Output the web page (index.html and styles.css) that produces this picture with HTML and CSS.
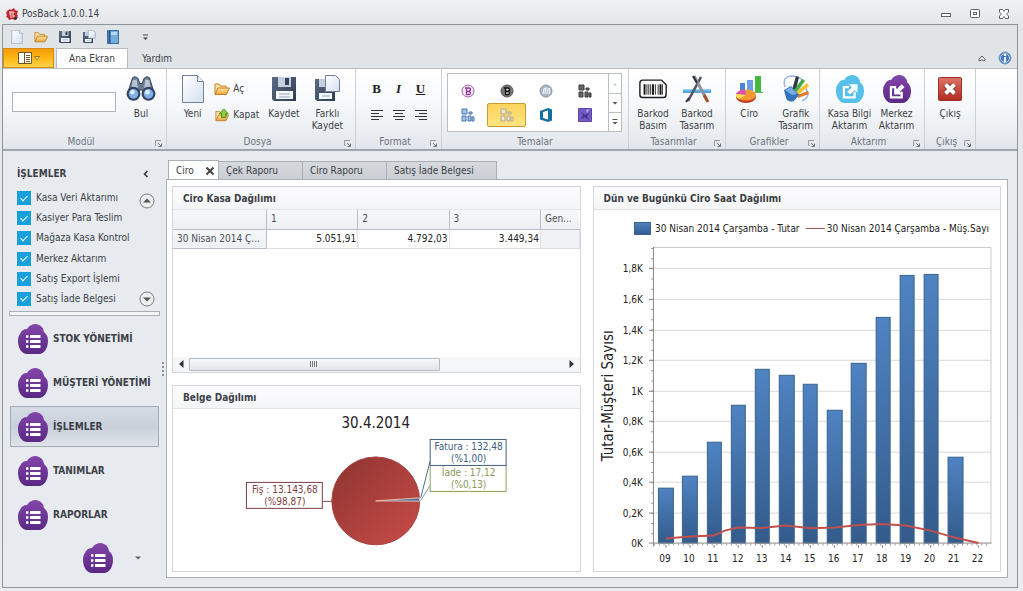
FILE: index.html
```html
<!DOCTYPE html>
<html lang="tr">
<head>
<meta charset="utf-8">
<meta name="viewport" content="width=device-width, initial-scale=1">
<title>PosBack 1.0.0.14</title>
<link rel="stylesheet" href="styles.css">
</head>
<body>
<svg class="defs" aria-hidden="true">
  <defs>
    <linearGradient id="g-purple" x1="0" y1="0" x2="0" y2="1"><stop offset="0" stop-color="#8346aa"/><stop offset="1" stop-color="#5a2884"/></linearGradient>
    <linearGradient id="g-page" x1="0" y1="0" x2="1" y2="1"><stop offset="0" stop-color="#fff"/><stop offset="1" stop-color="#d5e0f2"/></linearGradient>
    <linearGradient id="g-folder" x1="0" y1="0" x2="0" y2="1"><stop offset="0" stop-color="#fde3a0"/><stop offset="1" stop-color="#eda63e"/></linearGradient>
    <linearGradient id="g-disk" x1="0" y1="0" x2="1" y2="1"><stop offset="0" stop-color="#5c6c84"/><stop offset="1" stop-color="#2f3c52"/></linearGradient>
    <linearGradient id="g-red" x1="0" y1="0" x2="0" y2="1"><stop offset="0" stop-color="#dd7568"/><stop offset="1" stop-color="#b22a1f"/></linearGradient>
    <linearGradient id="g-bar" x1="0" y1="0" x2="0" y2="1"><stop offset="0" stop-color="#4f83c2"/><stop offset="1" stop-color="#335b8b"/></linearGradient>
    <linearGradient id="g-pie" x1="0" y1="0" x2="1" y2="1"><stop offset="0" stop-color="#8d3431"/><stop offset="1" stop-color="#c94c48"/></linearGradient>
  </defs>
  <symbol id="i-page" viewBox="0 0 28 28"><path d="M3.500 .5h15l6 6v21h-21z" fill="url(#g-page)" stroke="#73809d"/><path d="M18.500 .5v6h6" fill="#eef3fb" stroke="#73809d"/></symbol>
  <symbol id="i-folder" viewBox="0 0 16 14"><path d="M1 12V2h4l1.500 2H12v3" fill="#fbe3a6" stroke="#c98528"/><path d="M1 12.500L4 6h11.500l-3 6.500z" fill="url(#g-folder)" stroke="#c47a1e"/></symbol>
  <symbol id="i-close-folder" viewBox="0 0 16 16"><path d="M1 14V4h4l1.500 2H13v2" fill="#fbe3a6" stroke="#c98528"/><path d="M1 14.500L4 8h11.500l-3 6.500z" fill="url(#g-folder)" stroke="#c47a1e"/><path d="M10 1l5 5.500h-2.500V11h-5V6.500H5z" fill="#8ccf3e" stroke="#47851b"/></symbol>
  <symbol id="i-disk" viewBox="0 0 28 28"><path d="M2 2h24v24H4l-2-2z" fill="url(#g-disk)"/><path d="M8 2h13v10H8z" fill="#c5d0de"/><path d="M15 3h4v7h-4z" fill="#35425a"/><path d="M6 16h17v8H6z" fill="#f4f8fc"/><path d="M9 19h11M9 22h11" stroke="#8da3c0"/></symbol>
  <symbol id="i-disk-as" viewBox="0 0 28 28"><path d="M2 4h20v22H4l-2-2z" fill="url(#g-disk)"/><path d="M6 4h8v8H6z" fill="#c5d0de"/><path d="M6 18h13v6H6z" fill="#f4f8fc"/><path d="M9 21h8" stroke="#8da3c0"/><path d="M12.500 .5h10l4 4v12h-14z" fill="url(#g-page)" stroke="#73809d"/></symbol>
  <symbol id="i-book" viewBox="0 0 14 14"><path d="M1.500 .5h11v13h-11z" fill="#71aede" stroke="#3c6d9f"/><path d="M3.500 1v12" stroke="#285485" stroke-width="2"/><path d="M5 2h6v3H5z" fill="#b6daf3"/></symbol>
  <symbol id="i-find" viewBox="0 0 28 26"><path d="M2 16L6 3q2-3 5 0l2 5h2l2-5q3-3 5 0l4 13-8 2-3-4h-2l-3 4z" fill="#6b7a90" stroke="#3c4a60"/><path d="M6 5l4-1 1 8-6 2zM18 4l4 1 1 9-6-2z" fill="#b9c4d2"/><circle cx="7" cy="17.500" r="5.500" fill="#7fb0ea" stroke="#34445e" stroke-width="2"/><circle cx="21" cy="17.500" r="5.500" fill="#7fb0ea" stroke="#34445e" stroke-width="2"/><circle cx="6" cy="16" r="2.200" fill="#dcecfb"/><circle cx="20" cy="16" r="2.200" fill="#dcecfb"/></symbol>
  <symbol id="i-cloud" viewBox="0 0 30 30"><path d="M2 10Q4 5 9 5 12 0 18 0 25 1 26 8 30 11 30 17C30 24 26 30 21 30H9C4 30 0 24 0 17Q0 12 2 10Z"/></symbol>
  <symbol id="i-list" viewBox="0 0 30 30"><use href="#i-cloud" fill="url(#g-purple)"/><path d="M12 12.500h10.500M12 17.500h10.500M12 22.500h10.500" stroke="#fff" stroke-width="2.800"/><path d="M8 12.500h2.400M8 17.500h2.400M8 22.500h2.400" stroke="#fff" stroke-width="2.400"/></symbol>
  <symbol id="i-export" viewBox="0 0 30 30"><use href="#i-cloud" fill="#55c0ea"/><path d="M14 13H8.500v11H20v-6" fill="none" stroke="#fff" stroke-width="2.400"/><path d="M14 10h9v9l-3-3-5 5-3-3 5-5z" fill="#fff"/></symbol>
  <symbol id="i-import" viewBox="0 0 30 30"><use href="#i-cloud" fill="url(#g-purple)"/><path d="M14 13H8.500v11H20v-6" fill="none" stroke="#fff" stroke-width="2.400"/><path d="M12 21v-9l3 3 5-5 3 3-5 5 3 3z" fill="#fff"/></symbol>
  <symbol id="i-barcode" viewBox="0 0 32 28"><path d="M5 4.500h20l5 5V20q0 3-3 3H5q-3 0-3-3V7.500q0-3 3-3z" fill="#fff" stroke="#1c1c1c" stroke-width="1.500"/><path d="M7 9v11M16 9v11M24 9v11" stroke="#111" stroke-width="2"/><path d="M9.500 9v11M11.500 9v11M13.500 9v11M18.500 9v11M21.500 9v11M26 9v11" stroke="#222"/></symbol>
  <symbol id="i-appstore" viewBox="0 0 28 28"><path d="M0 14h28v4H0z" fill="#55a8df"/><path d="M0 14h28v1.500H0z" fill="#91cdf0"/><path d="M18 2L5 26" stroke="#51535f" stroke-width="2.600"/><path d="M11 1l13 24" stroke="#8c93a1" stroke-width="3"/><path d="M10 1l4 7" stroke="#2a2c35" stroke-width="2"/><path d="M21 20l4 7" stroke="#a5512b" stroke-width="3"/><path d="M6 23l-3 4" stroke="#333" stroke-width="2"/></symbol>
  <symbol id="i-charts" viewBox="0 0 28 28"><path d="M5 8h5v9H5z" fill="#4c86dc"/><path d="M12 5h6v12h-6z" fill="#6f9fe4"/><path d="M20 1h6v16h-6z" fill="#45b83d"/><path d="M4 17.500h24" stroke="#62b070"/><ellipse cx="11" cy="22" rx="10" ry="6" fill="#c23a20"/><ellipse cx="11" cy="20" rx="10" ry="5.500" fill="#f49a33"/><path d="M11 20L1 19q2-4 9-4.500z" fill="#d951b4"/><path d="M11 20l-7 4q-4-2-3-5z" fill="#f9de55"/></symbol>
  <symbol id="i-brushes" viewBox="0 0 28 28"><path d="M3 12q-3-10 6-11 7 0 13 5M24 14q5 8-4 12" fill="none" stroke="#9cb6dc" stroke-width="1.500"/><path d="M10 15L14 1l3 1-3 13z" fill="#343846"/><path d="M12 15L20 4l3 2-8 11z" fill="#48a844"/><path d="M14 17L25 8l2 3-11 9z" fill="#f2c22f"/><path d="M15 20l11-4 1 3-11 4z" fill="#e47b2c"/><path d="M2 15l7-4 8 9-5 6q-6 2-8-3z" fill="#3474bd"/><path d="M3 15l6-3 6 7-5 1z" fill="#79aee2"/></symbol>
  <symbol id="i-exit" viewBox="0 0 28 28"><rect x="2.500" y="2.500" width="23" height="23" rx="1" fill="url(#g-red)" stroke="#9d3128"/><path d="M9.500 9.500l9 9M18.500 9.500l-9 9" stroke="#8e2a22" stroke-width="6"/><path d="M9.500 9.500l9 9M18.500 9.500l-9 9" stroke="#fff" stroke-width="4"/></symbol>
  <symbol id="i-launch" viewBox="0 0 7 7"><path d="M.5 6V.5H6" fill="none" stroke="#969ba3"/><path d="M3 3l3 3M6.500 3.500v3h-3" fill="none" stroke="#6f757e"/></symbol>
  <symbol id="i-tiles" viewBox="0 0 14 14"><path d="M1 1h5v5H1zM1 8h4v5H1zM7 8h3v5H7zM11 9h2v4h-2zM8 4h3v2H8z" stroke-width="1"/></symbol>
</svg>

<header class="titlebar">
  <svg class="logo" viewBox="0 0 12 12"><path d="M1 3l3-2 1 1 3-2 1 2 3 1-1 3 1 2-2 2-1 2-3-1-3 1-1-2-2-1 1-2-1-2z" fill="#c02a30"/><path d="M3 4h5v1H4v2h4v2H4" fill="none" stroke="#fff" stroke-width=".8"/><path d="M7 10l5-1-2 3z" fill="#3a1a1c"/></svg>
  <h1 class="app-title">PosBack 1.0.0.14</h1>
  <div class="window-buttons">
    <button aria-label="Simge durumuna küçült"><svg viewBox="0 0 12 12"><rect x="1.500" y="5.500" width="9" height="3" fill="#fff" stroke="#5d6268"/></svg></button>
    <button aria-label="Ekranı kapla"><svg viewBox="0 0 12 12"><rect x="1.500" y="1.500" width="9" height="8" rx="1" fill="#fff" stroke="#5d6268"/><rect x="4.500" y="4.500" width="3" height="2" fill="#fff" stroke="#5d6268"/></svg></button>
    <button aria-label="Pencereyi kapat"><svg viewBox="0 0 12 12"><path d="M1.500 1.500h3L6 3.500l1.500-2h3v2.500L8.500 6l2 2v2.500h-3L6 8.500l-1.500 2h-3V8l2-2-2-2z" fill="#fff" stroke="#5d6268"/></svg></button>
  </div>
</header>

<div class="frame">
  <div class="quick-access">
    <button aria-label="Yeni"><svg viewBox="0 0 28 28"><use href="#i-page"/></svg></button>
    <button aria-label="Aç"><svg viewBox="0 0 16 14"><use href="#i-folder"/></svg></button>
    <button aria-label="Kaydet"><svg viewBox="0 0 28 28"><use href="#i-disk"/></svg></button>
    <button aria-label="Farklı Kaydet"><svg viewBox="0 0 28 28"><use href="#i-disk-as"/></svg></button>
    <button aria-label="Defter"><svg viewBox="0 0 14 14"><use href="#i-book"/></svg></button>
    <button class="qat-more" aria-label="Özelleştir"><svg viewBox="0 0 14 14"><path d="M5 5h5" stroke="#444"/><path d="M5 7.500h5l-2.500 2.500z" fill="#444"/></svg></button>
  </div>

  <nav class="ribbon-tabs">
    <button class="app-button" aria-label="Uygulama menüsü"><svg viewBox="0 0 24 12"><path d="M1.500 .5h13v11h-13z" fill="#fff" stroke="#6e571c"/><path d="M7.500 1v10" stroke="#6e571c"/><path d="M9 3.500h4M9 5.500h4M9 7.500h4M9 9.500h4" stroke="#6e571c"/><path d="M17.500 4.500h5L20 8z" fill="#fff" stroke="#a8730c"/></svg></button>
    <button class="ribbon-tab active">Ana Ekran</button>
    <button class="ribbon-tab">Yardım</button>
    <div class="ribbon-tools">
      <button aria-label="Şeridi daralt"><svg viewBox="0 0 14 14"><path d="M3.500 9L7 5l3.500 4-1.500 1-2-1.500L5 10z" fill="#fff" stroke="#555"/></svg></button>
      <button aria-label="Bilgi"><svg viewBox="0 0 14 14"><circle cx="7" cy="7" r="6" fill="#3f76bd" stroke="#7f9cc4"/><circle cx="7" cy="7" r="4.500" fill="none" stroke="#bcd5f2"/><path d="M7 3v2M7 6v5" stroke="#fff" stroke-width="2.200"/></svg></button>
    </div>
  </nav>

  <section class="ribbon" aria-label="Şerit">
    <div class="group group-module">
      <div class="group-body">
        <input class="module-input" type="text" aria-label="Modül">
        <button class="large"><svg viewBox="0 0 28 26"><use href="#i-find"/></svg>Bul</button>
      </div>
      <div class="caption"><span>Modül</span><svg><use href="#i-launch"/></svg></div>
    </div>
    <div class="group group-file">
      <div class="group-body">
        <button class="large"><svg viewBox="0 0 28 28"><use href="#i-page"/></svg>Yeni</button>
        <div class="small-stack">
          <button class="small"><svg viewBox="0 0 16 14"><use href="#i-folder"/></svg>Aç</button>
          <button class="small"><svg viewBox="0 0 16 16"><use href="#i-close-folder"/></svg>Kapat</button>
        </div>
        <button class="large"><svg viewBox="0 0 28 28"><use href="#i-disk"/></svg>Kaydet</button>
        <button class="large"><svg viewBox="0 0 28 28"><use href="#i-disk-as"/></svg>Farklı<br>Kaydet</button>
      </div>
      <div class="caption"><span>Dosya</span><svg><use href="#i-launch"/></svg></div>
    </div>
    <div class="group group-format">
      <div class="group-body format-grid">
        <button class="glyph bold">B</button>
        <button class="glyph italic">I</button>
        <button class="glyph underline">U</button>
        <button aria-label="Sola hizala"><svg viewBox="0 0 12 12"><path d="M0 1.500h12M0 4.500h8M0 7.500h12M0 10.500h8" stroke="#333"/></svg></button>
        <button aria-label="Ortala"><svg viewBox="0 0 12 12"><path d="M0 1.500h12M2 4.500h8M0 7.500h12M2 10.500h8" stroke="#333"/></svg></button>
        <button aria-label="Sağa hizala"><svg viewBox="0 0 12 12"><path d="M0 1.500h12M4 4.500h8M0 7.500h12M4 10.500h8" stroke="#333"/></svg></button>
      </div>
      <div class="caption"><span>Format</span><svg><use href="#i-launch"/></svg></div>
    </div>
    <div class="group group-themes">
      <div class="group-body">
        <div class="gallery">
          <div class="gallery-items">
            <button aria-label="Tema 1"><svg viewBox="0 0 14 14"><circle cx="7" cy="7" r="6" fill="#f6e6f6" stroke="#a45fae"/><path d="M5.500 4v6.500h2.500a1.500 1.500 0 0 0 0-3H6M8 7a1.500 1.500 0 0 0 0-3H4" fill="none" stroke="#8a3c98" stroke-width="1.300"/></svg></button>
            <button aria-label="Tema 2"><svg viewBox="0 0 14 14"><circle cx="7" cy="7" r="6" fill="#777" stroke="#555"/><path d="M5.500 4v6.500h2.500a1.500 1.500 0 0 0 0-3H6M8 7a1.500 1.500 0 0 0 0-3H4" fill="#ddd" stroke="#111" stroke-width="1.300"/></svg></button>
            <button aria-label="Tema 3"><svg viewBox="0 0 14 14"><circle cx="7" cy="7" r="6" fill="#a9b5c3" stroke="#8795a6"/><path d="M4 10l1-5 2-1-1 6M8 10l1-5q3-2 1 5" fill="none" stroke="#eff4f9" stroke-width="1.200"/></svg></button>
            <button aria-label="Tema 4"><svg viewBox="0 0 14 14"><use href="#i-tiles" fill="#666" stroke="#3d3d3d"/></svg></button>
            <button aria-label="Tema 5"><svg viewBox="0 0 14 14"><use href="#i-tiles" fill="#a3c2e8" stroke="#4878b2"/></svg></button>
            <button class="selected" aria-label="Tema 6"><svg viewBox="0 0 14 14"><use href="#i-tiles" fill="#eee8d2" stroke="#b0a68a"/></svg></button>
            <button aria-label="Tema 7"><svg viewBox="0 0 14 14"><path d="M1 3l8-3 4 1.500v11L9 14l-8-2.500zM4 4v6l5 1.500v-9z" fill="#146f9f" fill-rule="evenodd"/></svg></button>
            <button aria-label="Tema 8"><svg viewBox="0 0 14 14"><path d="M.5.5h13v13H.5z" fill="#7458c4" stroke="#5b48a4"/><path d="M3 4l4 3 5-3-3 4 2 4-4-3-4 2 2-4z" fill="#43318c"/><path d="M8 2l4-1-3 4z" fill="#b6a5e7"/></svg></button>
          </div>
          <div class="gallery-scroll">
            <button disabled aria-label="Yukarı"><svg viewBox="0 0 8 8"><path d="M2 5.500h4L4 3z" fill="#c6c9cd"/></svg></button>
            <button aria-label="Aşağı"><svg viewBox="0 0 8 8"><path d="M1.500 3h5L4 5.500z" fill="#555"/></svg></button>
            <button aria-label="Tümü"><svg viewBox="0 0 8 8"><path d="M1.500 1.500h5" stroke="#555"/><path d="M1.500 4h5L4 6.500z" fill="#555"/></svg></button>
          </div>
        </div>
      </div>
      <div class="caption"><span>Temalar</span></div>
    </div>
    <div class="group group-design">
      <div class="group-body">
        <button class="large"><svg viewBox="0 0 32 28"><use href="#i-barcode"/></svg>Barkod<br>Basım</button>
        <button class="large"><svg viewBox="0 0 28 28"><use href="#i-appstore"/></svg>Barkod<br>Tasarım</button>
      </div>
      <div class="caption"><span>Tasarımlar</span><svg><use href="#i-launch"/></svg></div>
    </div>
    <div class="group group-charts">
      <div class="group-body">
        <button class="large"><svg viewBox="0 0 28 28"><use href="#i-charts"/></svg>Ciro</button>
        <button class="large"><svg viewBox="0 0 28 28"><use href="#i-brushes"/></svg>Grafik<br>Tasarım</button>
      </div>
      <div class="caption"><span>Grafikler</span><svg><use href="#i-launch"/></svg></div>
    </div>
    <div class="group group-transfer">
      <div class="group-body">
        <button class="large"><svg viewBox="0 0 30 30"><use href="#i-export"/></svg>Kasa Bilgi<br>Aktarım</button>
        <button class="large"><svg viewBox="0 0 30 30"><use href="#i-import"/></svg>Merkez<br>Aktarım</button>
      </div>
      <div class="caption"><span>Aktarım</span><svg><use href="#i-launch"/></svg></div>
    </div>
    <div class="group group-exit">
      <div class="group-body">
        <button class="large"><svg viewBox="0 0 28 28"><use href="#i-exit"/></svg>Çıkış</button>
      </div>
      <div class="caption"><span>Çıkış</span><svg><use href="#i-launch"/></svg></div>
    </div>
  </section>

  <div class="workspace">
    <aside class="sidebar">
      <div class="side-head"><h2>İŞLEMLER</h2><button aria-label="Daralt"><svg viewBox="0 0 8 8"><path d="M5.500 1L2.500 4l3 3" fill="none" stroke="#333" stroke-width="1.500"/></svg></button></div>
      <div class="side-list">
        <div class="checks">
          <label><input type="checkbox" checked>Kasa Veri Aktarımı</label>
          <label><input type="checkbox" checked>Kasiyer Para Teslim</label>
          <label><input type="checkbox" checked>Mağaza Kasa Kontrol</label>
          <label><input type="checkbox" checked>Merkez Aktarım</label>
          <label><input type="checkbox" checked>Satış Export İşlemi</label>
          <label><input type="checkbox" checked>Satış İade Belgesi</label>
        </div>
        <div class="side-scroll">
          <button aria-label="Yukarı kaydır"><svg viewBox="0 0 16 16"><circle cx="8" cy="8" r="7" fill="#eceef0" stroke="#777c82"/><path d="M4 9.500h8L8 5.500z" fill="#555"/></svg></button>
          <button aria-label="Aşağı kaydır"><svg viewBox="0 0 16 16"><circle cx="8" cy="8" r="7" fill="#eceef0" stroke="#777c82"/><path d="M4 6.500h8l-4 4z" fill="#555"/></svg></button>
        </div>
      </div>
      <div class="side-splitter"></div>
      <nav class="side-nav">
        <button><svg><use href="#i-list"/></svg>STOK YÖNETİMİ</button>
        <button><svg><use href="#i-list"/></svg>MÜŞTERİ YÖNETİMİ</button>
        <button class="current"><svg><use href="#i-list"/></svg>İŞLEMLER</button>
        <button><svg><use href="#i-list"/></svg>TANIMLAR</button>
        <button><svg><use href="#i-list"/></svg>RAPORLAR</button>
      </nav>
      <div class="side-overflow">
        <button aria-label="Liste"><svg viewBox="0 0 30 30"><use href="#i-list"/></svg></button>
        <button class="more" aria-label="Diğer"><svg viewBox="0 0 8 8"><path d="M1 2.500h6L4 5.500z" fill="#666"/></svg></button>
      </div>
    </aside>
    <div class="grip"><svg viewBox="0 0 4 14"><path d="M1 1h2M1 5h2M1 9h2M1 13h2" stroke="#8a9099" stroke-width="2"/></svg></div>

    <main class="content">
      <div class="doc-tabs">
        <button class="doc-tab active">Ciro<svg viewBox="0 0 10 10"><path d="M1.500 1.500l7 7M8.500 1.500l-7 7" stroke="#444" stroke-width="2"/></svg></button>
        <button class="doc-tab">Çek Raporu</button>
        <button class="doc-tab">Ciro Raporu</button>
        <button class="doc-tab wide">Satış İade Belgesi</button>
      </div>
      <div class="panels">
        <section class="panel">
          <h3>Ciro Kasa Dağılımı</h3>
          <div class="pivot">
            <table>
              <colgroup><col class="c-name"><col class="c-val"><col class="c-val"><col class="c-val"><col></colgroup>
              <thead><tr><th aria-label="Tarih"></th><th scope="col">1</th><th scope="col">2</th><th scope="col">3</th><th scope="col">Gen...</th></tr></thead>
              <tbody><tr><th scope="row">30 Nisan 2014 Ç...</th><td>5.051,91</td><td>4.792,03</td><td>3.449,34</td><td class="total"></td></tr></tbody>
            </table>
          </div>
          <div class="hscroll">
            <button aria-label="Sola"><svg viewBox="0 0 8 10"><path d="M6.500 1v8L2 5z" fill="#333"/></svg></button>
            <div class="track"><div class="thumb"><svg viewBox="0 0 8 8"><path d="M.5 1v6M2.500 1v6M4.500 1v6M6.500 1v6" stroke="#777"/></svg></div></div>
            <button aria-label="Sağa"><svg viewBox="0 0 8 10"><path d="M1.500 1v8L6 5z" fill="#333"/></svg></button>
          </div>
        </section>

        <section class="panel panel-chart">
          <h3>Dün ve Bugünkü Ciro Saat Dağılımı</h3>
          <svg class="chart" viewBox="593 210 407 361" role="img" aria-label="Ciro saat dağılımı">
            <rect x="633.500" y="222.500" width="16" height="12" fill="url(#g-bar)" stroke="#38608f"/>
            <text x="654" y="232">30 Nisan 2014 Çarşamba - Tutar</text>
            <path d="M805 228.500h19" stroke="#a8504e"/>
            <text x="826" y="232">30 Nisan 2014 Çarşamba - Müş.Sayı</text>
            <path class="gridline" d="M653 268.500h337M653 299.500h337M653 330.500h337M653 360.500h337M653 391.500h337M653 421.500h337M653 452.500h337M653 482.500h337M653 513.500h337"/>
            <path d="M653 247.500h337.500v296" fill="none" stroke="#c9c9c9"/>
            <g fill="url(#g-bar)" stroke="#3a628f">
              <rect x="657.500" y="488.500" width="15" height="55"/><rect x="681.500" y="476.500" width="15" height="67"/><rect x="706.500" y="442.500" width="14" height="101"/><rect x="730.500" y="405.500" width="14" height="138"/><rect x="754.500" y="369.500" width="14" height="174"/><rect x="778.500" y="375.500" width="15" height="168"/><rect x="802.500" y="384.500" width="14" height="159"/><rect x="826.500" y="410.500" width="15" height="133"/><rect x="850.500" y="363.500" width="15" height="180"/><rect x="875.500" y="317.500" width="14" height="226"/><rect x="899.500" y="275.500" width="14" height="268"/><rect x="923.500" y="274.500" width="14" height="269"/><rect x="947.500" y="457.500" width="15" height="86"/>
            </g>
            <path d="M652.500 247v300M648 543.500h343" stroke="#888"/>
            <path class="axis" d="M648 268.500h5M648 299.500h5M648 330.500h5M648 360.500h5M648 391.500h5M648 421.500h5M648 452.500h5M648 482.500h5M648 513.500h5"/>
            <path d="M651.500 248v295" stroke="#888" stroke-width="2" stroke-dasharray="1 9.200"/>
            <path d="M653 545h337" stroke="#999" stroke-width="2" stroke-dasharray="1 3.820"/>
            <path d="M664.500 547h314" stroke="#888" stroke-width="3" stroke-dasharray="1 23.100"/>
            <polyline points="665,539 689,537 713,536 724,531 737,528 761,528.500 785,526 810,528.700 834,528 858,525.500 881,524.500 905,526 930,531 954,538 978,543.500" fill="none" stroke="#c0504d" stroke-width="2"/>
            <g text-anchor="end">
              <text x="642" y="272">1,8K</text><text x="642" y="303">1,6K</text><text x="642" y="334">1,4K</text><text x="642" y="364">1,2K</text><text x="642" y="395">1K</text><text x="642" y="425">0,8K</text><text x="642" y="456">0,6K</text><text x="642" y="486">0,4K</text><text x="642" y="517">0,2K</text><text x="642" y="547">0K</text>
            </g>
            <g text-anchor="middle">
              <text x="664" y="562">09</text><text x="688" y="562">10</text><text x="712" y="562">11</text><text x="737" y="562">12</text><text x="761" y="562">13</text><text x="785" y="562">14</text><text x="809" y="562">15</text><text x="833" y="562">16</text><text x="857" y="562">17</text><text x="881" y="562">18</text><text x="905" y="562">19</text><text x="929" y="562">20</text><text x="953" y="562">21</text><text x="977" y="562">22</text>
            </g>
            <text class="axis-title" text-anchor="middle" transform="translate(612 396) rotate(-90)">Tutar-Müşteri Sayısı</text>
          </svg>
        </section>

        <section class="panel">
          <h3>Belge Dağılımı</h3>
          <svg class="chart" viewBox="173 408 407 162" role="img" aria-label="Belge dağılımı">
            <text class="pie-title" x="376" y="427" text-anchor="middle">30.4.2014</text>
            <circle cx="376" cy="500" r="44" fill="url(#g-pie)" stroke="#a94442"/>
            <path d="M376 500l43.900-3v3.300z" fill="#4f6fa5" stroke="#e6c0ae"/>
            <path d="M323 500.500h9" stroke="#7a4a49"/>
            <path d="M421 497l9.500-37" fill="none" stroke="#4f7090"/>
            <path d="M421 499.500l9.500-15" fill="none" stroke="#7d9c9c"/>
            <rect x="246.500" y="481.500" width="76" height="26" fill="#fff" stroke="#763f43"/>
            <rect x="430.500" y="464.500" width="76" height="26" fill="#fff" stroke="#8f9e5e"/>
            <rect x="430.500" y="438.500" width="76" height="26" fill="#fff" stroke="#42607f"/>
            <g text-anchor="middle">
              <text class="t-red" x="285" y="492">Fiş : 13.143,68</text><text class="t-red" x="285" y="504">(%98,87)</text>
              <text class="t-blue" x="469" y="449">Fatura : 132,48</text><text class="t-blue" x="469" y="461">(%1,00)</text>
              <text class="t-green" x="469" y="475">İade : 17,12</text><text class="t-green" x="469" y="487">(%0,13)</text>
            </g>
          </svg>
        </section>
      </div>
    </main>
  </div>
</div>
</body>
</html>
```
FILE: styles.css
```css
* { box-sizing: border-box; }

body {
  margin: 0;
  min-height: 100vh;
  display: flex;
  flex-direction: column;
  font: 10px/12px "DejaVu Sans Condensed", "Noto Sans", sans-serif;
  color: #3b3f46;
  background: linear-gradient(#eff1f3, #e4e7ea 24px, #e9ecf0);
}

.defs { position: absolute; width: 0; height: 0; }
h1, h2, h3 { margin: 0; font-size: 10px; }
button {
  margin: 0;
  padding: 0;
  border: 0;
  background: none;
  font: inherit;
  color: inherit;
  display: flex;
  align-items: center;
  justify-content: center;
}
svg { display: block; flex: none; }

/* Title bar */
.titlebar { height: 24px; display: flex; align-items: center; padding: 3px 13px 0 6px; gap: 4px; }
.logo { width: 12px; height: 12px; }
.app-title { font-weight: normal; flex: 1; }
.window-buttons { display: flex; gap: 17px; }
.window-buttons svg { width: 12px; height: 12px; }

.frame {
  flex: 1;
  display: flex;
  flex-direction: column;
  margin: 0 5px 4px 2px;
  border: 1px solid #8e949b;
  background: #e7eaef;
}

/* Quick access and ribbon tabs */
.quick-access { height: 23px; display: flex; align-items: center; padding-left: 6px; gap: 8px; background: #e1e4e7; }
.quick-access button { width: 16px; height: 16px; }
.quick-access svg { width: 14px; height: 14px; }
.quick-access .qat-more { margin-left: 8px; }
.ribbon-tabs { height: 20px; display: flex; background: #e1e4e7; }
.app-button { width: 51px; margin-right: 2px; border: 1px solid #d68b12; background: linear-gradient(#f39a0c, #fdb813 50%, #ffd04a); }
.app-button svg { width: 24px; height: 12px; }
.ribbon-tab { width: 58px; padding-top: 1px; }
.ribbon-tab.active { width: 72px; background: #fff; border: 1px solid #b8bdc3; border-bottom: 0; }
.ribbon-tools { margin-left: auto; display: flex; gap: 9px; padding-right: 5px; }
.ribbon-tools svg { width: 14px; height: 14px; }

/* Ribbon */
.ribbon {
  height: 83px;
  display: flex;
  border-top: 1px solid #b8bdc3;
  border-bottom: 2px solid #9fa5ac;
  background: linear-gradient(#fff, #f6f8fa 45%, #e2e6eb);
}
.group { display: flex; flex-direction: column; border-right: 1px solid #cdd1d6; }
.group-body { flex: 1; display: flex; align-items: flex-start; padding-top: 6px; }
.group-module { width: 164px; }
.group-file { width: 189px; }
.group-format { width: 86px; }
.group-themes { width: 187px; }
.group-design { width: 97px; }
.group-charts { width: 94px; }
.group-transfer { width: 105px; }
.group-exit { width: 51px; }
.caption { height: 15px; display: flex; align-items: center; padding: 0 4px; color: #6d737c; }
.caption span { flex: 1; text-align: center; }
.caption svg { width: 7px; height: 7px; margin-top: 3px; }

.large { flex-direction: column; justify-content: flex-start; flex: 1 1 0; white-space: nowrap; }
.large svg { width: 30px; height: 28px; margin-bottom: 5px; }
.module-input { width: 104px; height: 20px; margin: 17px 0 0 9px; border: 1px solid #aeb3b9; background: #fff; }
.group-file .group-body { padding-left: 4px; padding-right: 6px; }
.group-design .group-body { padding-left: 2px; padding-right: 6px; }
.group-transfer .group-body { padding-left: 6px; padding-right: 4px; }
.small-stack { display: flex; flex-direction: column; gap: 10px; padding-top: 6px; width: 48px; }
.small { height: 16px; gap: 3px; justify-content: flex-start; }
.small svg { width: 16px; height: 14px; }

.group-body.format-grid { display: grid; grid-template-columns: repeat(3, 22px); grid-auto-rows: 26px; justify-content: center; align-items: stretch; padding-top: 7px; }
.format-grid svg { width: 12px; height: 12px; }
.glyph { font: 13px/14px "Liberation Serif", serif; color: #222; }
.bold { font-weight: bold; }
.italic { font-style: italic; font-weight: bold; }
.underline { text-decoration: underline; font-weight: bold; }

.gallery { flex: 1; display: flex; height: 59px; margin: 0 6px 0 5px; border: 1px solid #b9bec5; background: #fff; }
.group-themes .group-body { padding-top: 4px; }
.gallery-items { flex: 1; display: grid; grid-template-columns: repeat(4, 39px); grid-auto-rows: 24px; padding-top: 5px; }
.gallery-items svg { width: 14px; height: 14px; }
.gallery-items .selected { border: 1px solid #c99b2f; border-radius: 2px; background: linear-gradient(#fbd45c, #fde482); }
.gallery-scroll { width: 13px; display: grid; grid-template-rows: 1fr 1fr 1fr; border-left: 1px solid #b9bec5; }
.gallery-scroll button + button { border-top: 1px solid #b9bec5; }
.gallery-scroll svg { width: 8px; height: 8px; }

/* Workspace */
.workspace { flex: 1; display: flex; padding: 9px 9px 9px 0; }
.sidebar { width: 157px; display: flex; flex-direction: column; padding-left: 6px; }
.side-head { height: 26px; display: flex; align-items: center; justify-content: space-between; padding: 2px 10px 0 8px; }
.side-head svg { width: 8px; height: 8px; }
.side-list { display: flex; justify-content: space-between; padding-left: 8px; height: 124px; }
.checks { display: flex; flex-direction: column; justify-content: space-between; padding: 5px 0 4px; white-space: nowrap; }
.checks label { display: flex; align-items: center; gap: 5px; }
.checks input {
  appearance: none;
  width: 14px;
  height: 14px;
  margin: 0;
  display: grid;
  place-items: center;
  background: #18a0dc;
}
.checks input:checked::after {
  content: "";
  width: 3px;
  height: 6px;
  margin-bottom: 2px;
  border: solid #fff;
  border-width: 0 1px 1px 0;
  transform: rotate(45deg);
}
.side-scroll { display: flex; flex-direction: column; justify-content: space-between; padding: 7px 5px 3px 0; }
.side-scroll svg { width: 16px; height: 16px; }
.side-splitter { height: 5px; margin-top: 1px; border: 1px solid #a9afb7; background: #f3f5f7; }
.side-nav { display: flex; flex-direction: column; gap: 3px; margin-top: 2px; padding: 0 1px; }
.side-nav button { height: 41px; justify-content: flex-start; gap: 5px; padding-left: 7px; border: 1px solid transparent; font-weight: bold; white-space: nowrap; }
.side-nav svg { width: 30px; height: 30px; }
.side-nav .current { border-color: #a4abb5; background: linear-gradient(#d6dce4, #c9d0da 50%, #dfe4ea); }
.side-overflow { display: flex; justify-content: center; gap: 21px; margin-top: 8px; padding-left: 56px; }
.side-overflow svg { width: 30px; height: 30px; }
.side-overflow .more svg { width: 8px; height: 8px; }
.grip { width: 6px; display: flex; align-items: center; justify-content: center; }
.grip svg { width: 4px; height: 14px; }

.content { flex: 1; display: flex; flex-direction: column; min-width: 0; }
.doc-tabs { height: 19px; display: flex; align-items: flex-end; padding-left: 2px; }
.doc-tab { width: 84px; height: 18px; justify-content: flex-start; padding: 1px 0 0 7px; border: 1px solid #a9afb7; border-left: 0; border-bottom: 0; background: linear-gradient(#d6d9dd, #cbcfd4); white-space: nowrap; }
.doc-tab.wide { width: 110px; }
.doc-tab.active { width: 51px; height: 20px; gap: 11px; margin-bottom: -1px; border-left: 1px solid #a9afb7; background: #fff; }
.doc-tab svg { width: 10px; height: 10px; }
.panels {
  flex: 1;
  display: grid;
  grid-template-columns: repeat(2, minmax(0, 1fr));
  grid-template-rows: repeat(2, minmax(0, 1fr));
  gap: 12px;
  padding: 6px 6px 5px 5px;
  border: 1px solid #a9afb7;
  background: #fff;
}
.panel { display: flex; flex-direction: column; border: 1px solid #d3d6da; background: #fff; }
.panel-chart { grid-column: 2; grid-row: 1 / 3; }
.panel h3 { height: 23px; padding: 0 10px; line-height: 23px; border-bottom: 1px solid #e2e4e7; background: linear-gradient(#fcfcfd, #f4f5f7); }
.chart { width: 100%; height: auto; }

/* Pivot table */
.pivot { flex: 1; }
table { width: 100%; table-layout: fixed; border-collapse: collapse; color: #222; }
.c-name { width: 23%; }
.c-val { width: 22.5%; }
th, td { height: 19px; padding: 0 2px 0 4px; white-space: nowrap; overflow: hidden; }
th { font-weight: normal; text-align: left; color: #4a4e55; background: linear-gradient(#f7f8fa, #eceff3); border: 1px solid #b9bec6; border-top: 0; }
tr > th:first-child { border-left: 0; }
tr > th:last-child { border-right: 0; }
td { padding-right: 1px; text-align: right; border-right: 1px solid #dcdfe4; border-bottom: 1px solid #dcdfe4; }
.total { background: #f0f2f6; }

.hscroll { height: 15px; display: flex; background: #f5f6f7; }
.hscroll button { width: 16px; }
.hscroll button svg { width: 8px; height: 10px; }
.track { flex: 1; padding: 1px 0; }
.thumb { width: 67%; height: 13px; display: flex; align-items: center; justify-content: center; border: 1px solid #b6bac0; border-radius: 1px; background: linear-gradient(#f7f8f9, #e2e4e7); }
.thumb svg { width: 8px; height: 8px; }

/* Chart text */
.chart text { fill: #222; }
.chart .axis-title, .chart .pie-title { font-size: 15px; }
.chart .gridline { stroke: #d9d9d9; }
.chart .axis { stroke: #888; }
.chart text.t-red { fill: #7c3f42; }
.chart text.t-blue { fill: #3d5b80; }
.chart text.t-green { fill: #8b9657; }
```
